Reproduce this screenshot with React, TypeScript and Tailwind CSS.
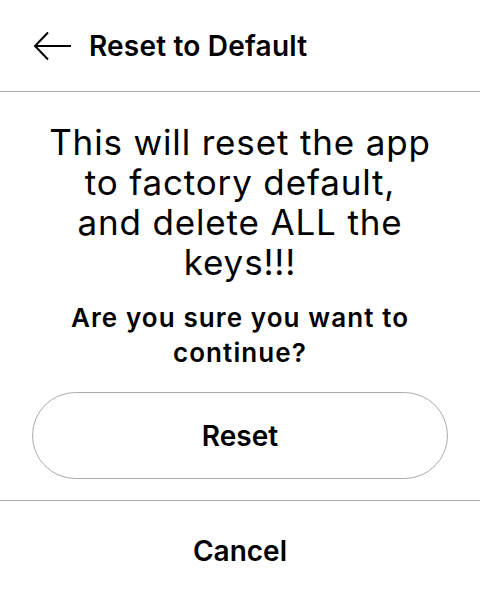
export default function App() {
  return (
    <div className="flex h-[600px] w-[480px] flex-col bg-white text-black" style={{ fontFamily: "Inter, 'Noto Sans', sans-serif" }}>
      <header className="flex h-[92px] items-center gap-[17px] border-b border-[#aaaaaa] pl-[33px]">
        <svg width="39" height="30" viewBox="0 0 39 30" fill="none" stroke="black" strokeWidth="2">
          <path d="M38 15H2M15 1.5L2 15l13 13.5" />
        </svg>
        <h1 className="text-[28px] font-semibold tracking-[0.2px]">Reset to Default</h1>
      </header>
      <main className="flex flex-col items-center px-[32px] pt-[30px]">
        <p className="text-center text-[35px] leading-[40px] tracking-[0.85px]">
          This will reset the app
          <br />
          to factory default,
          <br />
          and delete ALL the
          <br />
          keys!!!
        </p>
        <p className="mt-[18px] text-center text-[26px] font-semibold leading-[35px] tracking-[1.1px]">
          Are you sure you want to
          <br />
          continue?
        </p>
        <button className="mt-[22px] h-[87px] w-full rounded-full border border-[#aaaaaa] text-[28px] font-semibold">
          Reset
        </button>
      </main>
      <div className="mt-[21px] border-t border-[#aaaaaa]">
        <button className="h-[99px] w-full text-[28px] font-semibold">Cancel</button>
      </div>
    </div>
  )
}
